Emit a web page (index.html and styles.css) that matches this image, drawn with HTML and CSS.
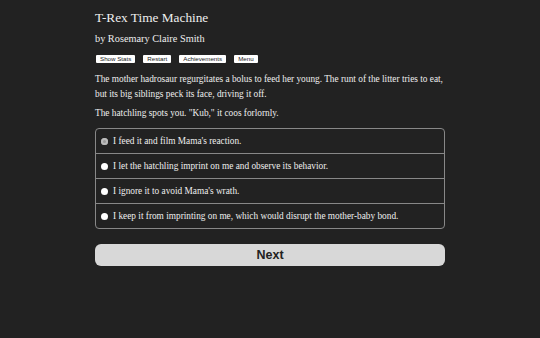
FILE: index.html
```html
<!DOCTYPE html>
<html lang="en">
<head>
    <meta charset="UTF-8">
    <title>T-Rex Time Machine</title>
    <link rel="stylesheet" href="styles.css">
</head>
<body>
    <div class="container">
        <h1 class="title">T-Rex Time Machine</h1>
        <h2 class="byline">by Rosemary Claire Smith</h2>
        <div class="toolbar">
            <button class="tool-button">Show Stats</button>
            <button class="tool-button">Restart</button>
            <button class="tool-button">Achievements</button>
            <button class="tool-button">Menu</button>
        </div>
        <p class="text">The mother hadrosaur regurgitates a bolus to feed her young. The runt of the litter tries to eat, but its big siblings peck its face, driving it off.</p>
        <p class="text second">The hatchling spots you. "Kub," it coos forlornly.</p>
        <div class="choices">
            <label class="choice"><span class="radio checked"></span>I feed it and film Mama's reaction.</label>
            <label class="choice"><span class="radio"></span>I let the hatchling imprint on me and observe its behavior.</label>
            <label class="choice"><span class="radio"></span>I ignore it to avoid Mama's wrath.</label>
            <label class="choice"><span class="radio"></span>I keep it from imprinting on me, which would disrupt the mother-baby bond.</label>
        </div>
        <button class="next-button">Next</button>
    </div>
</body>
</html>
```

FILE: styles.css
```css
body { margin: 0; background-color: #222222; color: #eeeeee; font-family: "Liberation Serif", serif; }
.container { width: 350px; margin: 0 auto; padding-top: 9px; }
.title { margin: 0; font-size: 13.3px; font-weight: normal; line-height: 18px; }
.byline { margin: 5px 0 0; font-size: 10.3px; font-weight: normal; line-height: 14px; }
.toolbar { display: flex; gap: 8px; margin-top: 9px; padding-left: 1px; }
.tool-button { background-color: #ffffff; color: #222; border: none; border-radius: 1px; font-family: "Liberation Sans", sans-serif; font-size: 6.2px; line-height: 8px; padding: 0 4px; height: 8px; }
.text { margin: 9px 0 0; font-size: 9.3px; line-height: 15px; }
.text.second { margin-top: 4px; }
.choices { margin-top: 7px; border: 1px solid #888; border-radius: 4px; }
.choice { display: flex; align-items: center; height: 24px; padding-left: 5px; font-size: 9.3px; border-top: 1px solid #888; }
.choice:first-child { border-top: none; }
.radio { width: 7px; height: 7px; border-radius: 50%; background-color: #ffffff; margin-right: 5px; flex: none; }
.radio.checked { background-color: #999; box-shadow: inset 0 0 0 2px #bbb; }
.next-button { display: block; width: 100%; margin-top: 15px; height: 22px; background-color: #d8d8d8; color: #222; border: none; border-radius: 6px; font-family: "Liberation Sans", sans-serif; font-weight: bold; font-size: 12.5px; }
```
